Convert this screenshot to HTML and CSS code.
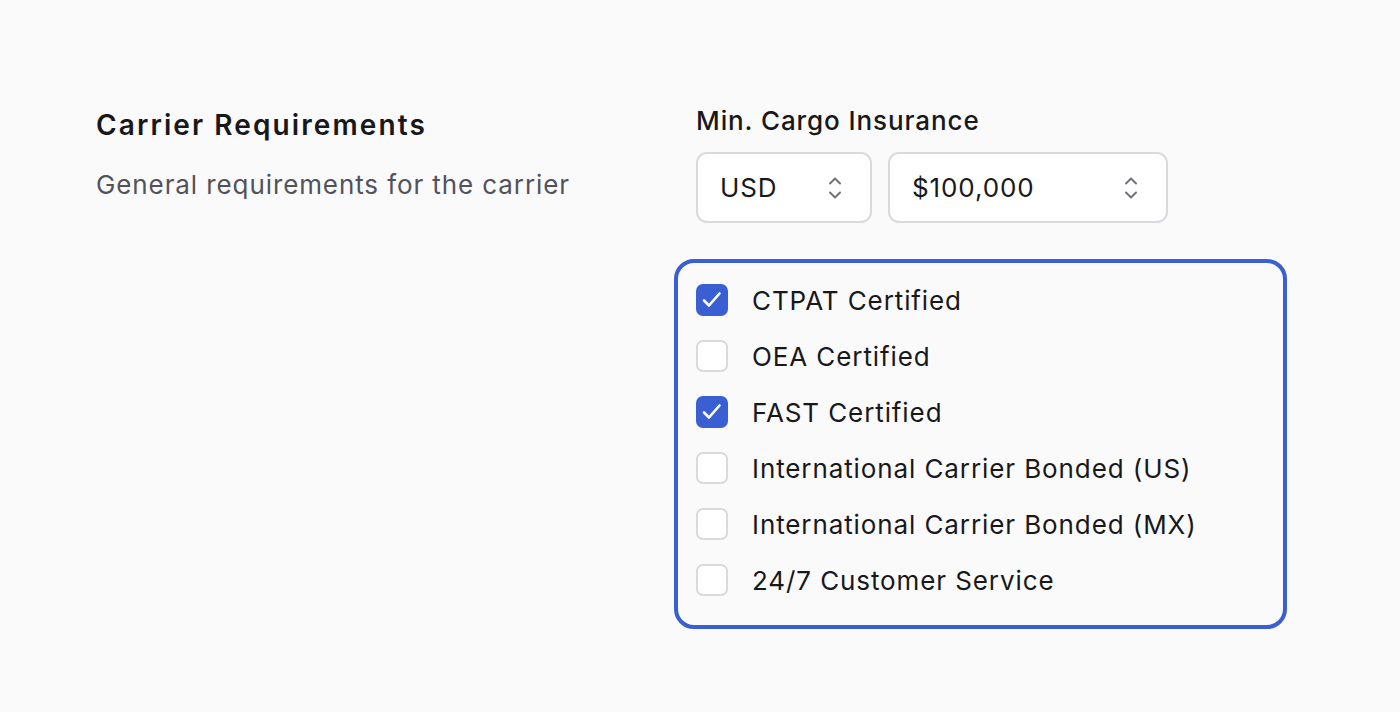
FILE: index.html
```html
<!DOCTYPE html>
<html lang="en">
<head>
    <meta charset="UTF-8">
    <title>Carrier Requirements</title>
    <link rel="stylesheet" href="styles.css">
</head>
<body>
<div class="section">
    <div class="section-info">
        <h2 class="section-title">Carrier Requirements</h2>
        <p class="section-desc">General requirements for the carrier</p>
    </div>
    <div class="section-fields">
        <div class="field">
            <label class="field-label">Min. Cargo Insurance</label>
            <div class="select-row">
                <div class="select select-currency">
                    <span>USD</span>
                    <svg class="chevrons" width="14" height="26" viewBox="0 0 14 26" fill="none" stroke="currentColor" stroke-width="2" stroke-linecap="round" stroke-linejoin="round">
                        <path d="M2 8.5 L7 3.5 L12 8.5"/>
                        <path d="M2 17.5 L7 22.5 L12 17.5"/>
                    </svg>
                </div>
                <div class="select select-amount">
                    <span>$100,000</span>
                    <svg class="chevrons" width="14" height="26" viewBox="0 0 14 26" fill="none" stroke="currentColor" stroke-width="2" stroke-linecap="round" stroke-linejoin="round">
                        <path d="M2 8.5 L7 3.5 L12 8.5"/>
                        <path d="M2 17.5 L7 22.5 L12 17.5"/>
                    </svg>
                </div>
            </div>
        </div>

        <div class="checklist">
            <label class="check-row">
                <span class="checkbox checked">
                    <svg width="32" height="32" viewBox="0 0 32 32" fill="none" stroke="#fff" stroke-width="2.6" stroke-linecap="round" stroke-linejoin="round"><path d="M8 16.5 L13 21.5 L23.5 9.5"/></svg>
                </span>
                <span>CTPAT Certified</span>
            </label>
            <label class="check-row">
                <span class="checkbox"></span>
                <span>OEA Certified</span>
            </label>
            <label class="check-row">
                <span class="checkbox checked">
                    <svg width="32" height="32" viewBox="0 0 32 32" fill="none" stroke="#fff" stroke-width="2.6" stroke-linecap="round" stroke-linejoin="round"><path d="M8 16.5 L13 21.5 L23.5 9.5"/></svg>
                </span>
                <span>FAST Certified</span>
            </label>
            <label class="check-row">
                <span class="checkbox"></span>
                <span>International Carrier Bonded (US)</span>
            </label>
            <label class="check-row">
                <span class="checkbox"></span>
                <span>International Carrier Bonded (MX)</span>
            </label>
            <label class="check-row">
                <span class="checkbox"></span>
                <span>24/7 Customer Service</span>
            </label>
        </div>
    </div>
</div>
</body>
</html>
```

FILE: styles.css
```css
body {
    margin: 0;
    background: #fafafa;
    font-family: Inter, "Noto Sans", sans-serif;
    color: #18181b;
    letter-spacing: 0.9px;
}

.section {
    display: flex;
    padding: 105px 96px 0 96px;
}

.section-info {
    width: 600px;
}

.section-title {
    margin: 0;
    font-size: 28px;
    font-weight: 600;
    line-height: 40px;
    letter-spacing: 2.1px;
}

.section-desc {
    margin: 21px 0 0 0;
    font-size: 26px;
    line-height: 38px;
    color: #52525b;
}

.section-fields {
    display: flex;
    flex-direction: column;
    margin-top: -1px;
}

.field-label {
    display: block;
    font-size: 26px;
    font-weight: 500;
    line-height: 34px;
}

.select-row {
    display: flex;
    gap: 16px;
    margin-top: 14px;
}

.select {
    display: flex;
    align-items: center;
    justify-content: space-between;
    box-sizing: border-box;
    height: 71px;
    padding: 0 28px 0 22px;
    background: #fff;
    border: 2px solid #d9d9de;
    border-radius: 11px;
    font-size: 26px;
}

.select-currency {
    width: 176px;
}

.select-amount {
    width: 280px;
}

.chevrons {
    color: #71717a;
}

.checklist {
    display: flex;
    flex-direction: column;
    gap: 24px;
    width: 613px;
    box-sizing: border-box;
    margin: 36px 0 0 -22px;
    padding: 21px 18px 29px 18px;
    border: 4px solid #3a5fd3;
    border-radius: 20px;
}

.check-row {
    display: flex;
    align-items: center;
    gap: 24px;
    height: 32px;
    font-size: 26px;
}

.checkbox {
    display: flex;
    align-items: center;
    justify-content: center;
    flex-shrink: 0;
    box-sizing: border-box;
    width: 32px;
    height: 32px;
    background: #fff;
    border: 2px solid #d9d9de;
    border-radius: 7px;
}

.checkbox.checked {
    background: #3a5fd3;
    border: 0;
}
```
